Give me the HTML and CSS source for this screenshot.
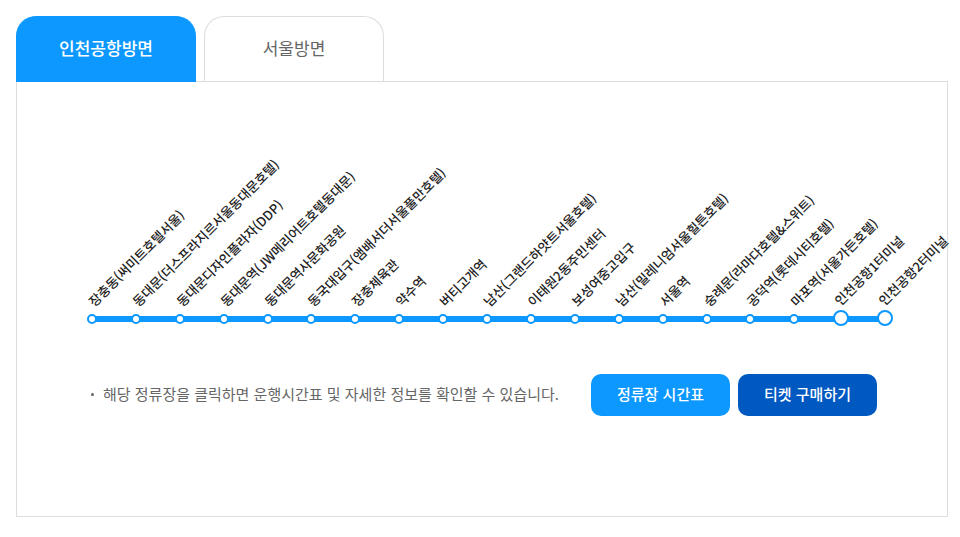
FILE: index.html
```html
<!DOCTYPE html>
<html lang="ko">
<head>
<meta charset="utf-8">
<meta name="viewport" content="width=device-width, initial-scale=1">
<title>노선 안내</title>
<link rel="stylesheet" href="styles.css">
</head>
<body>
<main class="route">
  <div class="tabs" role="tablist">
    <button type="button" class="tab tab-active" role="tab" id="tab-airport" aria-selected="true" aria-controls="panel">인천공항방면</button>
    <button type="button" class="tab" role="tab" id="tab-seoul" aria-selected="false" aria-controls="panel">서울방면</button>
  </div>
  <section class="panel" id="panel" role="tabpanel" aria-labelledby="tab-airport">
    <ol class="stops">
      <li><button type="button" class="stop"><span class="label">장충동(써미트호텔서울)</span></button></li>
      <li><button type="button" class="stop"><span class="label">동대문(더스프라지르서울동대문호텔)</span></button></li>
      <li><button type="button" class="stop"><span class="label">동대문디자인플라자(DDP)</span></button></li>
      <li><button type="button" class="stop"><span class="label">동대문역(JW메리어트호텔동대문)</span></button></li>
      <li><button type="button" class="stop"><span class="label">동대문역사문화공원</span></button></li>
      <li><button type="button" class="stop"><span class="label">동국대입구(앰배서더서울풀만호텔)</span></button></li>
      <li><button type="button" class="stop"><span class="label">장충체육관</span></button></li>
      <li><button type="button" class="stop"><span class="label">약수역</span></button></li>
      <li><button type="button" class="stop"><span class="label">버티고개역</span></button></li>
      <li><button type="button" class="stop"><span class="label">남산(그랜드하얏트서울호텔)</span></button></li>
      <li><button type="button" class="stop"><span class="label">이태원2동주민센터</span></button></li>
      <li><button type="button" class="stop"><span class="label">보성여중고입구</span></button></li>
      <li><button type="button" class="stop"><span class="label">남산(밀레니엄서울힐튼호텔)</span></button></li>
      <li><button type="button" class="stop"><span class="label">서울역</span></button></li>
      <li><button type="button" class="stop"><span class="label">숭례문(라마다호텔&amp;스위트)</span></button></li>
      <li><button type="button" class="stop"><span class="label">공덕역(롯데시티호텔)</span></button></li>
      <li><button type="button" class="stop"><span class="label">마포역(서울가든호텔)</span></button></li>
      <li><button type="button" class="stop stop-terminal"><span class="label">인천공항1터미널</span></button></li>
      <li><button type="button" class="stop stop-terminal"><span class="label">인천공항2터미널</span></button></li>
    </ol>
    <div class="footer">
      <p class="note">해당 정류장을 클릭하면 운행시간표 및 자세한 정보를 확인할 수 있습니다.</p>
      <div class="actions">
        <button type="button" class="action">정류장 시간표</button>
        <button type="button" class="action action-dark">티켓 구매하기</button>
      </div>
    </div>
  </section>
</main>
</body>
</html>
```
FILE: styles.css
```css
* {
  box-sizing: border-box;
}

body {
  margin: 0;
  background: #fff;
  color: #222;
  font-family: "Noto Sans CJK KR", "Noto Sans", sans-serif;
}

button {
  margin: 0;
  padding: 0;
  border: 0;
  background: none;
  color: inherit;
  font: inherit;
  cursor: pointer;
}

.route {
  padding: 16px 12px 20px 16px;
}

.tabs {
  display: flex;
  gap: 8px;
}

.tab {
  width: 180px;
  height: 65px;
  padding-bottom: 4px;
  border: 1px solid #ddd;
  border-bottom: 0;
  border-radius: 20px 20px 0 0;
  color: #666;
  font-size: 17px;
}

.tab-active {
  z-index: 1;
  height: 66px;
  margin-bottom: -1px;
  border-color: #0c98ff;
  background: #0c98ff;
  color: #fff;
  font-weight: 500;
}

.panel {
  padding: 228px 26px 100px 70px;
  border: 1px solid #ddd;
}

.stops {
  position: relative;
  display: grid;
  grid-template-columns: repeat(19, 1fr);
  align-items: end;
  height: 16px;
  margin: 0;
  padding: 0;
  list-style: none;
}

/* the line runs from the first stop to the last one */
.stops::before {
  content: "";
  position: absolute;
  top: 6px;
  left: 5px;
  right: calc(100% / 19 - 8px);
  height: 6px;
  background: #0c98ff;
}

.stop {
  position: relative;
  display: block;
  width: 10px;
  height: 10px;
  margin-bottom: 2px;
  border: 2px solid #0c98ff;
  border-radius: 50%;
  background: #fff;
}

.stop-terminal {
  width: 16px;
  height: 16px;
  margin-bottom: 0;
}

.label {
  position: absolute;
  bottom: 11px;
  left: 9px;
  font-size: 13px;
  font-weight: 500;
  line-height: 20px;
  white-space: nowrap;
  transform: rotate(-45deg);
  transform-origin: left bottom;
}

.stop-terminal .label {
  bottom: 14px;
}

.footer {
  display: flex;
  justify-content: space-between;
  align-items: center;
  margin-top: 48px;
  padding-right: 44px;
}

.note {
  display: flex;
  align-items: center;
  gap: 9px;
  margin: 0;
  padding: 0 0 4px 4px;
  color: #666;
  font-size: 15px;
}

.note::before {
  content: "";
  width: 3px;
  height: 3px;
  margin-top: 3px;
  border-radius: 50%;
  background: #666;
}

.actions {
  display: flex;
  gap: 8px;
}

.action {
  width: 139px;
  height: 42px;
  padding-bottom: 4px;
  border-radius: 10px;
  background: #0c98ff;
  color: #fff;
  font-size: 15px;
  font-weight: 500;
}

.action-dark {
  background: #0059c1;
}
```
